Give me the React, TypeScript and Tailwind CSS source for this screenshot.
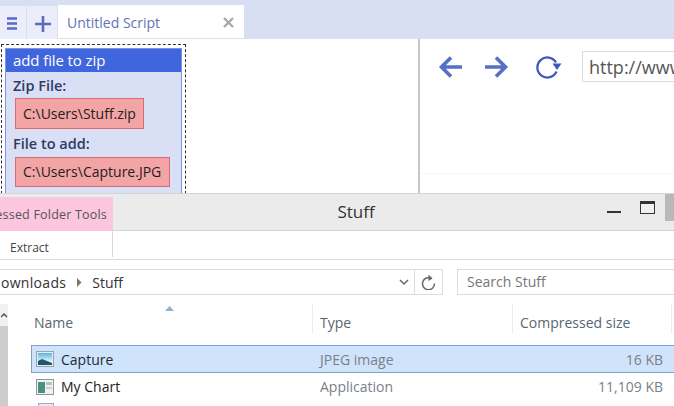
import React from "react";

export default function App() {
  return (
    <div className="w-[674px] h-[406px] overflow-hidden bg-white flex flex-col font-['Open_Sans',sans-serif]">
      {/* Top tab bar */}
      <div className="h-[39px] bg-[#d9dff2] flex items-end gap-px shrink-0">
        <div className="w-[26px] h-[33px] bg-[#ebeefa] flex items-center justify-center pr-[2px] pt-[2px]">
          <svg width="10" height="13" viewBox="0 0 10 13"><path d="M0 1.500h10M0 6.500h10M0 11.500h10" stroke="#5a6bc0" strokeWidth="2.600" /></svg>
        </div>
        <div className="w-[30px] h-[33px] bg-[#ebeefa] flex items-center justify-center pl-[2px] pt-[3px]">
          <svg width="16" height="16" viewBox="0 0 16 16"><path d="M8 0v16M0 8h16" stroke="#5a6bc0" strokeWidth="2.600" /></svg>
        </div>
        <div className="w-[186px] h-[33px] mb-px bg-white flex items-center justify-between pl-[9px] pr-[10px]">
          <span className="text-[14px] text-[#6173b4] leading-none pt-[3px]">Untitled Script</span>
          <svg width="11" height="11" viewBox="0 0 11 11" className="mt-[1px]"><path d="M1 1l9 9M10 1l-9 9" stroke="#a9a9ad" strokeWidth="2.400" /></svg>
        </div>
      </div>

      {/* Middle panes */}
      <div className="h-[154px] flex shrink-0 overflow-hidden">
        <div className="w-[418px] pt-[5px] pl-px shrink-0">
          <div className="w-[185px] h-[160px] border border-dashed border-[#333] p-[3px]">
            <div className="h-full border border-[#7d93e4] bg-[#d9e0f5]">
              <div className="h-[23px] bg-[#3f66dc] text-white text-[15px] leading-[22px] pl-[7px] tracking-[-0.1px]">add file to zip</div>
              <div className="pl-[7px] pt-[3px]">
                <div className="text-[14.500px] font-semibold text-[#2e3a66] leading-[22px]">Zip File:</div>
                <div className="ml-[2px] mt-[1px] w-[129px] h-[31px] bg-[#f3a4a5] border border-[#dc6a72] text-[14px] text-[#222] leading-[29px] pl-[7px]">C:\Users\Stuff.zip</div>
                <div className="text-[14.500px] font-semibold text-[#2e3a66] leading-[22px] mt-[4px]">File to add:</div>
                <div className="ml-[2px] mt-[2px] w-[155px] h-[30px] bg-[#f3a4a5] border border-[#dc6a72] text-[14px] text-[#222] leading-[28px] pl-[7px] whitespace-nowrap">C:\Users\Capture.JPG</div>
              </div>
            </div>
          </div>
        </div>
        <div className="w-[2px] bg-[#c4c4cc] shrink-0" />
        <div className="flex-1 min-w-0 overflow-hidden">
          <div className="h-[135px] border-b border-[#f5f5f5] flex items-start pt-[13px] pl-[18px]">
            <svg width="24" height="24" viewBox="0 0 24 24" fill="none" stroke="#5570c4" strokeWidth="3.600" className="shrink-0 mt-[3px]"><path d="M24 12H4M13 2.500L3.500 12l9.500 9.500" /></svg>
            <svg width="24" height="24" viewBox="0 0 24 24" fill="none" stroke="#5570c4" strokeWidth="3.600" className="shrink-0 ml-[23px] mt-[3px]"><path d="M0 12h20M11 2.500l9.500 9.500-9.500 9.500" /></svg>
            <svg width="26" height="24" viewBox="0 0 26 24" fill="none" className="shrink-0 ml-[27px] mt-[3px]">
              <path d="M20 7.500A10 10 0 1 0 20.500 16.500" stroke="#3e57bb" strokeWidth="2.200" />
              <path d="M16.500 8.500h9l-4.500 6.500z" fill="#3e57bb" />
            </svg>
            <div className="ml-[20px] -mt-px h-[31px] flex-1 border-y border-l border-[#dcdcdc] text-[18px] text-[#555] leading-[31px] pl-[6px] whitespace-nowrap overflow-hidden">http://www</div>
          </div>
        </div>
      </div>

      {/* Explorer title bar */}
      <div className="h-[38px] bg-[#ebebeb] border-y border-[#d4d4d4] flex shrink-0 relative">
        <div className="w-[113px] mt-[3px] h-[34px] bg-[#fcc6de] overflow-hidden flex justify-end items-center pr-[6px] pt-[2px]">
          <span className="text-[12.500px] text-[#555] whitespace-nowrap tracking-[0.2px]">essed Folder Tools</span>
        </div>
        <div className="flex-1 flex justify-center">
          <span className="text-[17px] text-[#333] leading-[36px] -ml-[75px]">Stuff</span>
        </div>
        <div className="absolute left-[607px] top-[17px] w-[14px] h-[2px] bg-[#333]" />
        <div className="absolute left-[640px] top-[7px] w-[15px] h-[13px] border border-[#333] border-t-[3px] bg-[#f0f0f0]" />
        <div className="absolute left-[665px] top-0 w-[9px] h-[27px] bg-[#b9b9b9]" />
      </div>

      {/* Ribbon row */}
      <div className="h-[29px] border-b border-[#dcdcdc] flex shrink-0">
        <div className="w-[113px] h-[26px] border-r border-[#d8d8d8] text-[12px] text-[#444] leading-[33px] pl-[10px]">Extract</div>
      </div>

      {/* Address row */}
      <div className="h-[36px] pt-[9px] flex items-start shrink-0">
        <div className="w-[444px] h-[26px] border-y border-r border-[#dcdcdc] flex items-center justify-between shrink-0 -ml-px">
          <div className="flex items-center text-[14px] text-[#333] whitespace-nowrap">
            <span className="ml-[2px] tracking-[0.3px]">ownloads</span>
            <svg width="6" height="9" viewBox="0 0 6 9" className="ml-[10px] mr-[10px]"><path d="M1 0l4.500 4.500L1 9z" fill="#777" /></svg>
            <span>Stuff</span>
          </div>
          <div className="flex items-center h-full">
            <svg width="10" height="7" viewBox="0 0 10 7" fill="none" className="mr-[5px]"><path d="M1 1l4 4 4-4" stroke="#666" strokeWidth="1.500" /></svg>
            <div className="w-[28px] h-full border-l border-[#dcdcdc] flex items-center justify-center">
              <svg width="15" height="16" viewBox="0 0 15 16" fill="none"><path d="M10.500 4.500A6 6 0 1 0 13.500 9.500" stroke="#666" strokeWidth="1.500" /><path d="M7.500 0.500l4 4-4 2.500z" fill="#666" /></svg>
            </div>
          </div>
        </div>
        <div className="ml-[14px] flex-1 h-[26px] border-y border-l border-[#dcdcdc] text-[14px] text-[#777] leading-[24px] pl-[9px]">Search Stuff</div>
      </div>

      {/* File list */}
      <div className="flex-1 flex min-h-0 relative">
        <div className="w-[8px] shrink-0 mr-px flex flex-col pt-[8px]">
          <div className="h-[22px] bg-[#f0f0f0] flex items-center justify-center shrink-0">
            <svg width="7" height="5" viewBox="0 0 7 5" fill="none"><path d="M0 4l3-3 3 3" stroke="#555" strokeWidth="1.500" /></svg>
          </div>
          <div className="flex-1 bg-[#cdcdcd]" />
        </div>
        <div className="flex-1 min-w-0 pl-[22px]">
          <div className="h-[49px] flex relative text-[14px] text-[#5a6670]">
            <svg width="9" height="5" viewBox="0 0 9 5" className="absolute left-[134px] top-[10px]"><path d="M0 5l4.500-5L9 5z" fill="#8fb2cf" /></svg>
            <div className="w-[281px] pl-[3px] pt-[16px]">Name</div>
            <div className="w-[200px] border-l border-[#ececec] pl-[7px] pt-[8px] h-[30px] mt-[8px]">Type</div>
            <div className="w-[160px] border-x border-[#ececec] pl-[7px] h-[30px] mt-[8px] pt-[8px] whitespace-nowrap">Compressed size</div>
          </div>
          <div className="h-[28px] bg-[#cfe4fb] border-y border-[#7da2ce] border-l flex items-center text-[14px]">
            <div className="w-[281px] flex items-center pl-[4px] shrink-0">
              <svg width="18" height="16" viewBox="0 0 18 16" className="shrink-0">
                <defs>
                  <linearGradient id="sky" x1="0" y1="0" x2="0" y2="1">
                    <stop offset="0" stopColor="#5fb4dc" />
                    <stop offset="1" stopColor="#dff1f5" />
                  </linearGradient>
                </defs>
                <rect x="0.500" y="0.500" width="17" height="15" fill="#e4edf5" stroke="#9aa4ad" />
                <rect x="2" y="2" width="14" height="8" fill="url(#sky)" />
                <path d="M2 10l4-2 10 4v2H2z" fill="#1d5a6e" />
              </svg>
              <span className="ml-[7px] text-[#1c2b3a]">Capture</span>
            </div>
            <div className="w-[200px] pl-[7px] text-[#7a8088] shrink-0">JPEG image</div>
            <div className="w-[150px] text-right text-[#7a8088] shrink-0">16 KB</div>
          </div>
          <div className="h-[27px] flex items-center text-[14px] pl-px">
            <div className="w-[281px] flex items-center pl-[4px] shrink-0">
              <svg width="18" height="16" viewBox="0 0 18 16" className="shrink-0">
                <rect x="0.500" y="0.500" width="17" height="15" fill="#f2f2f2" stroke="#8f969c" />
                <rect x="2" y="3" width="7" height="11" fill="#4d8f80" />
                <rect x="10" y="3" width="6" height="3" fill="#b4c4c4" />
                <rect x="10" y="8" width="6" height="2" fill="#c7cfcf" />
              </svg>
              <span className="ml-[7px] text-[#222]">My Chart</span>
            </div>
            <div className="w-[200px] pl-[7px] text-[#7a8088] shrink-0">Application</div>
            <div className="w-[150px] text-right text-[#7a8088] shrink-0">11,109 KB</div>
          </div>
          <div className="ml-[7px] mt-[3px] w-[16px] h-[3px] border border-b-0 border-[#a8a8c0] bg-[#e8e8f4]" />
        </div>
      </div>
    </div>
  );
}
